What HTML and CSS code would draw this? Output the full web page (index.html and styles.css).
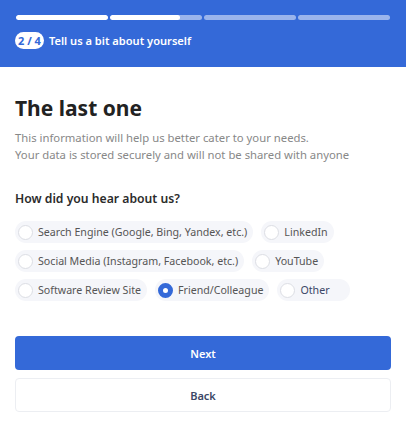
FILE: index.html
```html
<!DOCTYPE html>
<html>
<head>
<meta charset="utf-8">
<link rel="stylesheet" href="styles.css">
</head>
<body>
<header class="header">
  <div class="progress">
    <div class="seg"><div class="fill" style="width:100%"></div></div>
    <div class="seg"><div class="fill" style="width:76%"></div></div>
    <div class="seg"></div>
    <div class="seg"></div>
  </div>
  <div class="step">
    <span class="badge">2 / 4</span>
    <span class="step-title">Tell us a bit about yourself</span>
  </div>
</header>
<main class="content">
  <h1 class="title">The last one</h1>
  <p class="desc">This information will help us better cater to your needs.<br>Your data is stored securely and will not be shared with anyone</p>
  <h2 class="question">How did you hear about us?</h2>
  <div class="options">
    <label class="opt"><span class="radio"></span>Search Engine (Google, Bing, Yandex, etc.)</label>
    <label class="opt"><span class="radio"></span>LinkedIn</label>
    <label class="opt"><span class="radio"></span>Social Media (Instagram, Facebook, etc.)</label>
    <label class="opt"><span class="radio"></span>YouTube</label>
    <label class="opt"><span class="radio"></span>Software Review Site</label>
    <label class="opt"><span class="radio checked"></span>Friend/Colleague</label>
    <label class="opt hover"><span class="radio"></span>Other</label>
  </div>
  <div class="actions">
    <button class="btn primary">Next</button>
    <button class="btn secondary">Back</button>
  </div>
</main>
</body>
</html>
```

FILE: styles.css
```css
* { box-sizing: border-box; }
body {
  margin: 0;
  font-family: "Noto Sans", "Open Sans", sans-serif;
  background: #fff;
}
.header {
  background: #3469d8;
  height: 67px;
  padding: 15px 16px 0 16px;
}
.progress {
  display: flex;
  gap: 2px;
}
.seg {
  flex: 1;
  height: 5px;
  border-radius: 3px;
  background: rgba(255,255,255,0.5);
  overflow: hidden;
}
.fill {
  height: 100%;
  background: #fff;
  border-radius: 3px;
}
.step {
  display: flex;
  align-items: center;
  gap: 5px;
  margin-top: 12px;
  margin-left: -1px;
}
.badge {
  background: #fff;
  color: #3469d8;
  font-weight: 700;
  font-size: 11px;
  line-height: 17px;
  height: 17px;
  padding: 0 3px;
  border-radius: 9px;
}
.step-title {
  color: #fff;
  font-size: 11.1px;
  font-weight: 600;
}
.content {
  padding: 0 15px;
}
.title {
  margin: 27px 0 0 0;
  font-size: 21px;
  line-height: 28px;
  font-weight: 700;
  color: #222;
}
.desc {
  margin: 7px 0 0 0;
  font-size: 11.3px;
  line-height: 17px;
  color: #888;
}
.question {
  margin: 27px 0 0 0;
  font-size: 12.2px;
  line-height: 17px;
  font-weight: 600;
  color: #2b2b2b;
}
.options {
  display: flex;
  flex-wrap: wrap;
  gap: 7px 8px;
  margin-top: 14px;
}
.opt {
  display: flex;
  align-items: center;
  gap: 5px;
  height: 22px;
  padding: 0 6px 0 3px;
  border-radius: 11px;
  background: #f5f6fa;
  font-size: 10.65px;
  color: #555;
}
.opt.hover {
  color: #3b4766;
  padding-right: 20px;
}
.radio {
  width: 15px;
  height: 15px;
  border-radius: 50%;
  border: 1px solid #dcdee4;
  background: #fff;
  flex: none;
}
.radio.checked {
  border: 5px solid #3469d8;
}
.actions {
  margin-top: 35px;
  display: flex;
  flex-direction: column;
  gap: 8px;
}
.btn {
  height: 34px;
  border-radius: 4px;
  font-family: inherit;
  font-size: 11px;
  font-weight: 600;
  width: 100%;
}
.btn.primary {
  background: #3469d8;
  border: none;
  color: #fff;
}
.btn.secondary {
  background: #fff;
  border: 1px solid #eceef2;
  color: #3b4766;
}
```
